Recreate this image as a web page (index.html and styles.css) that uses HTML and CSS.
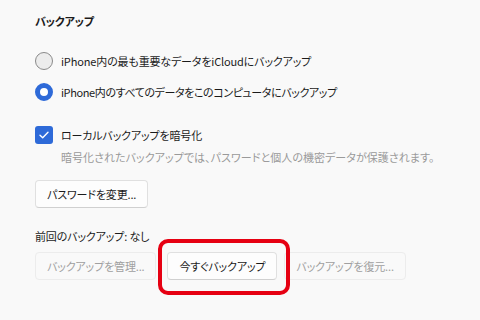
FILE: index.html
```html
<!DOCTYPE html>
<html lang="ja">
<head>
    <meta charset="UTF-8">
    <title>バックアップ</title>
    <link rel="stylesheet" href="styles.css">
</head>
<body>
<div id="backup">
    <h2 class="title">バックアップ</h2>

    <div class="options">
        <label class="radio">
            <span class="radio-mark"></span>
            <span>iPhone内の最も重要なデータをiCloudにバックアップ</span>
        </label>
        <label class="radio checked">
            <span class="radio-mark"></span>
            <span>iPhone内のすべてのデータをこのコンピュータにバックアップ</span>
        </label>
    </div>

    <label class="check">
        <span class="check-mark">
            <svg width="10" height="8" viewBox="0 0 10 8"><path d="M1 4.2 L3.7 6.8 L9 1.2" fill="none" stroke="#fff" stroke-width="1.4" stroke-linecap="round" stroke-linejoin="round"/></svg>
        </span>
        <span>ローカルバックアップを暗号化</span>
    </label>
    <p class="hint">暗号化されたバックアップでは、パスワードと個人の機密データが保護されます。</p>

    <button type="button" class="btn">パスワードを変更...</button>

    <p class="last">前回のバックアップ: なし</p>
    <div class="actions">
        <button type="button" class="btn" disabled>バックアップを管理...</button>
        <span class="marked">
            <button type="button" class="btn">今すぐバックアップ</button>
        </span>
        <button type="button" class="btn" disabled>バックアップを復元...</button>
    </div>
</div>
</body>
</html>
```

FILE: styles.css
```css
* {
    margin: 0;
    padding: 0;
    box-sizing: border-box;
}
html, body {
    height: 100%;
}
body {
    background-color: #f9f9f9;
    color: #1b1b1b;
    font-family: "Noto Sans CJK JP", "Noto Sans", sans-serif;
    font-size: 11px;
    letter-spacing: -0.15px;
    font-feature-settings: "palt";
}
#backup {
    padding: 12px 0 0 35px;
}
.title {
    font-size: 11px;
    font-weight: 700;
    line-height: 18px;
}
.options {
    margin-top: 22px;
    display: flex;
    flex-direction: column;
    gap: 13px;
}
.radio, .check {
    display: flex;
    align-items: center;
    gap: 8px;
    line-height: 18px;
}
.radio.checked {
    letter-spacing: -0.4px;
}
.radio-mark {
    width: 18px;
    height: 18px;
    border-radius: 50%;
    border: 1px solid #8a8a8a;
    background-color: #ececec;
}
.radio.checked .radio-mark {
    border: 5px solid #2e6ad8;
    background-color: #fff;
}
.check {
    margin-top: 25px;
}
.check-mark {
    width: 18px;
    height: 18px;
    border-radius: 3px;
    background-color: #2e6ad8;
    display: flex;
    align-items: center;
    justify-content: center;
}
.hint {
    margin: 5px 0 0 26px;
    color: #9a9a9a;
    font-size: 11px;
    letter-spacing: 0.05px;
    line-height: 16px;
}
.btn {
    font: inherit;
    letter-spacing: inherit;
    font-feature-settings: "palt";
    height: 28px;
    padding: 0 11px;
    border: 1px solid #e0e0e0;
    border-bottom-color: #d0d0d0;
    border-radius: 4px;
    background-color: #fdfdfd;
    color: #1b1b1b;
}
#backup > .btn {
    margin-top: 15px;
}
.btn:disabled {
    background-color: #f9f9f9;
    border-color: #ececec;
    color: #a0a0a0;
}
.last {
    margin-top: 19px;
    line-height: 18px;
}
.actions {
    margin-top: 7px;
    display: flex;
    gap: 11px;
}
.marked + .btn {
    margin-left: -4px;
}
.marked {
    position: relative;
    z-index: 1;
    display: flex;
}
.marked::after {
    content: "";
    position: absolute;
    top: -13px;
    left: -9px;
    right: -13px;
    bottom: -15px;
    border: 4px solid #e60012;
    border-radius: 10px;
}
```
